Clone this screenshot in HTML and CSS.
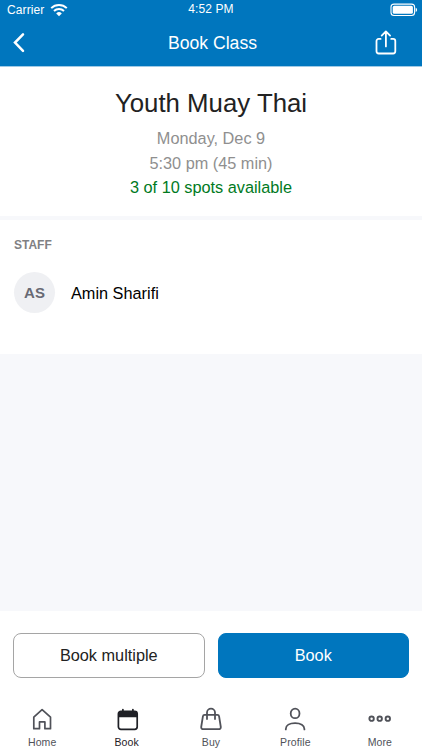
FILE: index.html
```html
<!DOCTYPE html>
<html lang="en">
<head>
<meta charset="utf-8">
<title>Book Class</title>
<link rel="stylesheet" href="styles.css">
</head>
<body>
<div class="app">
  <header class="top">
    <div class="status">
      <div class="carrier">
        <span class="carrier-name">Carrier</span>
        <svg class="wifi" width="18" height="14" viewBox="0 0 18 14" fill="none" stroke="#fff" stroke-width="2">
          <path d="M1.2 5.1a11.3 11.3 0 0 1 15.6 0M4 8.1a7.3 7.3 0 0 1 10 0"/>
          <path d="M6.2 10.4a4.1 4.1 0 0 1 5.6 0L9 13.2z" fill="#fff" stroke="none"/>
        </svg>
      </div>
      <span class="time">4:52 PM</span>
      <svg class="battery" width="28" height="14" viewBox="0 0 28 14">
        <rect x="1" y="1.1" width="23.6" height="11.4" rx="3" fill="none" stroke="#fff" stroke-width="1.1"/>
        <rect x="2.7" y="2.8" width="20.2" height="8" rx="1.6" fill="#fff"/>
        <path d="M25.7 4.7a2.4 2.4 0 0 1 0 4.4z" fill="#fff"/>
      </svg>
    </div>
    <div class="nav">
      <svg class="back" width="14" height="22" viewBox="0 0 14 22" fill="none" stroke="#fff" stroke-width="2.5" stroke-linecap="round"><path d="M11 2.4 3 10.6l8 8.2"/></svg>
      <h1 class="nav-title">Book Class</h1>
      <svg class="share" width="24" height="28" viewBox="0 0 24 28" fill="none" stroke="#fff" stroke-width="1.8" stroke-linecap="round" stroke-linejoin="round"><path d="M6.6 9.9H4.7a2.2 2.2 0 0 0-2.2 2.2v10.2a2.2 2.2 0 0 0 2.2 2.2h14.4a2.2 2.2 0 0 0 2.2-2.2V12.1a2.2 2.2 0 0 0-2.2-2.2h-1.9M11.9 17.4V2.8M7.7 6.6l4.2-4.2 4.2 4.2"/></svg>
    </div>
  </header>
  <section class="summary">
    <h2 class="class-name">Youth Muay Thai</h2>
    <p class="when day">Monday, Dec 9</p>
    <p class="when hour">5:30 pm (45 min)</p>
    <p class="spots">3 of 10 spots available</p>
  </section>
  <section class="staff">
    <h3 class="staff-heading">STAFF</h3>
    <div class="person">
      <span class="avatar">AS</span>
      <span class="person-name">Amin Sharifi</span>
    </div>
  </section>
  <div class="spacer"></div>
  <div class="actions">
    <button class="button outline"><span>Book multiple</span></button>
    <button class="button filled"><span>Book</span></button>
  </div>
  <nav class="tabs">
    <div class="tab">
      <svg width="24" height="24" viewBox="0 0 24 24" fill="none" stroke="#505259" stroke-width="1.7" stroke-linejoin="round"><path d="M3.8 10.2 12.1 2.6l8.4 7.6v11.5h-5.6v-6.8H9.5v6.8H3.8z"/></svg>
      <span class="home-label">Home</span>
    </div>
    <div class="tab active">
      <svg width="24" height="24" viewBox="0 0 24 24" fill="none" stroke="#1f2026" stroke-width="1.7" stroke-linecap="round"><rect x="3.4" y="4.3" width="18.8" height="18" rx="2.5"/><path d="M3.3 10.3V6.4a2.2 2.2 0 0 1 2.2-2.2h14.6a2.2 2.2 0 0 1 2.2 2.2v3.9z" fill="#1f2026" stroke="none"/><path d="M7.9 2.6V5M17.9 2.6V5"/></svg>
      <span class="book-label">Book</span>
    </div>
    <div class="tab">
      <svg width="24" height="24" viewBox="0 0 24 24" fill="none" stroke="#505259" stroke-width="1.8" stroke-linecap="round" stroke-linejoin="round"><path d="M5.6 7.9h12.8a1.7 1.7 0 0 1 1.7 1.4L21.8 20a2 2 0 0 1-2 2.2H4.2a2 2 0 0 1-2-2.2L3.9 9.3a1.7 1.7 0 0 1 1.7-1.4zM8 12V5.6a4 4 0 0 1 8 0V12"/></svg>
      <span class="buy-label">Buy</span>
    </div>
    <div class="tab">
      <svg width="24" height="24" viewBox="0 0 24 24" fill="none" stroke="#505259" stroke-width="1.8" stroke-linecap="round"><ellipse cx="12.1" cy="6.4" rx="4.4" ry="4.8"/><path d="M2.8 22.4v-.5c0-3.5 3.6-5.8 9.3-5.8s9.3 2.3 9.3 5.8v.5"/></svg>
      <span class="profile-label">Profile</span>
    </div>
    <div class="tab">
      <svg width="24" height="24" viewBox="0 0 24 24" fill="none" stroke="#505259" stroke-width="1.9"><circle cx="3.6" cy="11.7" r="2.2"/><circle cx="11.7" cy="11.7" r="2.2"/><circle cx="19.8" cy="11.7" r="2.2"/></svg>
      <span class="more-label">More</span>
    </div>
  </nav>
</div>
</body>
</html>
```
FILE: styles.css
```css
* { box-sizing: border-box; }
body, h1, h2, h3, p { margin: 0; }
h1, h2, h3 { font-weight: 400; }
body {
  font-family: "Liberation Sans", Arial, sans-serif;
  background: #fff;
}
svg { display: block; flex: none; }
.app {
  width: 422px;
  height: 750px;
  display: flex;
  flex-direction: column;
  overflow: hidden;
  white-space: nowrap;
}
.top { height: 67px; background: #0076be; color: #fff; border-bottom: 1px solid #9fcae6; }
.status {
  height: 20px;
  display: grid;
  grid-template-columns: 1fr auto 1fr;
  padding: 0 4px 0 7px;
  font-size: 12px;
  line-height: 19px;
}
.carrier { display: flex; gap: 6px; line-height: 20px; letter-spacing: .1px; }
.wifi { margin-top: 3px; }
.time { letter-spacing: .1px; margin-right: 3px; }
.battery { justify-self: end; margin-top: 3px; }
.nav {
  height: 46px;
  padding: 0 24px 0 12px;
  display: grid;
  grid-template-columns: 24px 1fr 24px;
  align-items: center;
}
.nav-title { font-size: 17.6px; line-height: 24px; text-align: center; padding-left: 15px; }
.share { justify-self: end; }
.summary { height: 149px; padding-top: 19px; text-align: center; }
.class-name { font-size: 25.8px; line-height: 34px; color: #222; }
.when { font-size: 16.3px; line-height: 24px; color: #8f8f8f; }
.day { margin-top: 6px; }
.hour { margin-top: 1px; }
.spots { font-size: 16.3px; line-height: 24px; color: #007a1e; }
.staff { height: 138px; border-top: 4px solid #f7f8fb; padding: 18px 14px 0; }
.staff-heading { font-size: 12px; line-height: 14px; font-weight: 700; color: #808083; }
.person { display: flex; align-items: center; gap: 16px; margin-top: 20px; }
.avatar {
  width: 41px;
  height: 41px;
  border-radius: 50%;
  background: #eff0f3;
  color: #686a74;
  font-size: 15px;
  font-weight: 700;
  line-height: 41px;
  text-align: center;
}
.person-name { font-size: 16.3px; line-height: 20px; padding-top: 1px; color: #000; }
.spacer { flex: 1; background: #f7f8fb; }
.actions { display: flex; gap: 13px; padding: 22px 13px 0; height: 88px; }
.button {
  flex: 1;
  height: 45px;
  padding: 0;
  border: 1px solid #a5a5a5;
  border-radius: 8px;
  background: #fff;
  font: 16.3px/43px "Liberation Sans", Arial, sans-serif;
  color: #222;
}
.filled { background: #0076be; border-color: #0076be; color: #fff; }
.tabs { display: flex; height: 51px; padding-top: 8px; }
.tab {
  flex: 1;
  display: flex;
  flex-direction: column;
  align-items: center;
  gap: 4px;
  font-size: 10.5px;
  line-height: 14px;
  letter-spacing: .12px;
  color: #505259;
}
.active { color: #1f2026; }
```
